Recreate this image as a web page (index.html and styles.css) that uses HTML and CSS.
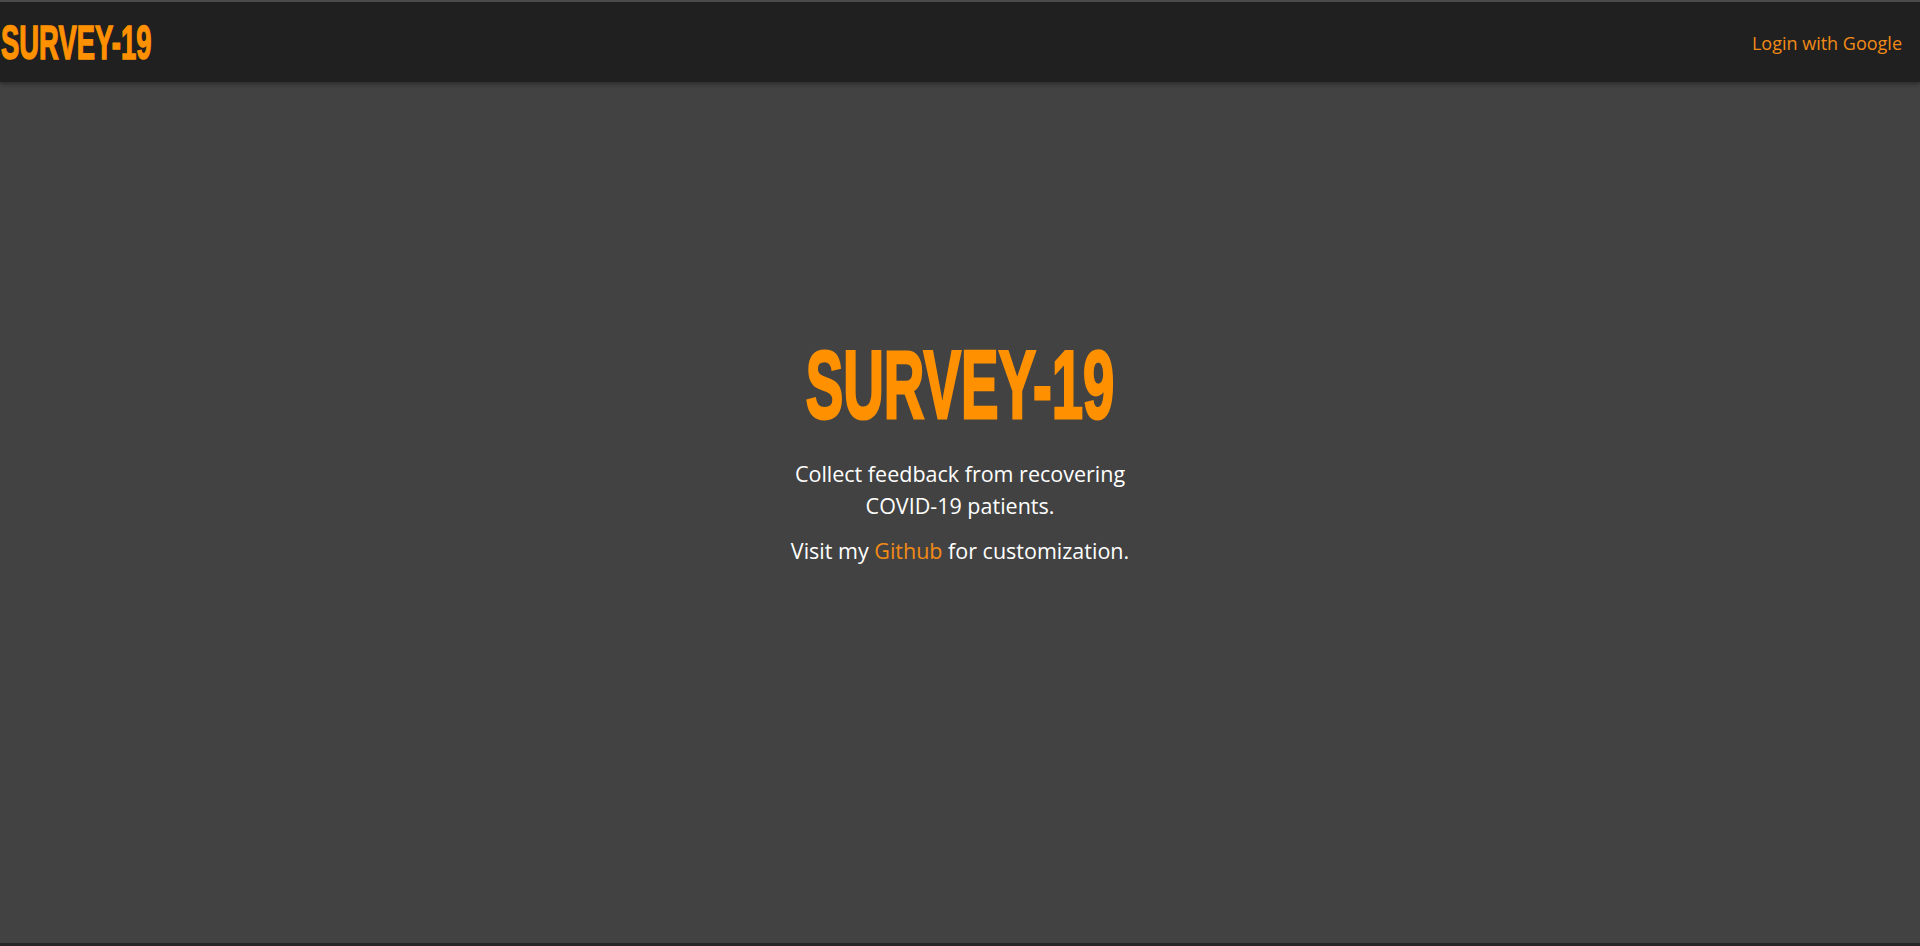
FILE: index.html
```html
<!DOCTYPE html>
<html lang="en">
<head>
<meta charset="utf-8">
<title>Survey-19</title>
<link rel="stylesheet" href="styles.css">
</head>
<body>
<header class="navbar">
  <a class="brand" href="#"><span class="brand-text">SURVEY-19</span></a>
  <a class="login" href="#">Login with Google</a>
</header>
<main class="hero">
  <h1 class="hero-title"><span class="hero-title-text">SURVEY-19</span></h1>
  <p class="hero-lead">Collect feedback from recovering COVID-19 patients.</p>
  <p class="hero-lead">Visit my <a class="hero-link" href="#">Github</a> for customization.</p>
</main>
<div class="bottom-strip"></div>
</body>
</html>
```

FILE: styles.css
```css
* { box-sizing: border-box; }
html, body { height: 100%; }
body {
  margin: 0;
  background: #424242;
  font-family: "Open Sans", "Noto Sans", sans-serif;
  display: flex;
  flex-direction: column;
  overflow: hidden;
}
.navbar {
  height: 82px;
  flex: 0 0 82px;
  border-top: 2px solid #4b4b4b;
  background: #202020;
  display: flex;
  align-items: center;
  justify-content: space-between;
  padding: 0 18px 0 0;
  box-shadow: 0 2px 4px rgba(0,0,0,0.35);
  position: relative;
  z-index: 1;
}
.brand {
  text-decoration: none;
  display: block;
  width: 160px;
}
.brand-text {
  display: inline-block;
  font-family: "Liberation Sans", Arial, sans-serif;
  font-weight: 700;
  font-size: 49px;
  line-height: 1;
  color: #ff9100;
  -webkit-text-stroke: 1.5px #ff9100;
  transform: scaleX(0.56);
  transform-origin: left center;
  white-space: nowrap;
  margin-left: 1px;
}
.login {
  font-family: "Open Sans", "Noto Sans", sans-serif;
  font-size: 18px;
  color: #f28a16;
  text-decoration: none;
  margin-top: 2px;
}
.hero {
  flex: 1;
  display: flex;
  flex-direction: column;
  align-items: center;
  padding-top: 254px;
  color: #ffffff;
  text-align: center;
}
.hero-title {
  margin: 0;
  height: 96px;
  display: flex;
  justify-content: center;
  width: 600px;
}
.hero-title-text {
  display: inline-block;
  font-family: "Liberation Sans", Arial, sans-serif;
  font-weight: 700;
  font-size: 97px;
  line-height: 1;
  color: #ff9100;
  -webkit-text-stroke: 3px #ff9100;
  transform: scaleX(0.58);
  transform-origin: center;
  white-space: nowrap;
}
.hero-lead {
  max-width: 380px;
  margin: 26px 0 0;
  font-size: 21.5px;
  line-height: 32px;
}
.hero-lead + .hero-lead { margin-top: 13px; max-width: 420px; }
.hero-link { color: #f28a16; text-decoration: none; }
.bottom-strip {
  height: 3px;
  flex: 0 0 3px;
  background: #262626;
}
```
